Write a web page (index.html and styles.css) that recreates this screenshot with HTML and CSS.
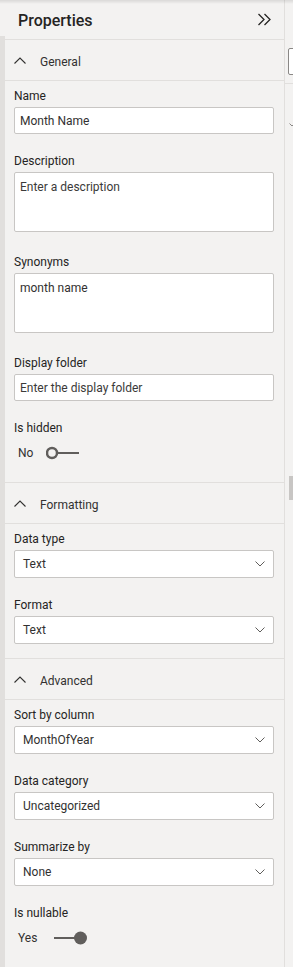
FILE: index.html
```html
<!DOCTYPE html>
<html lang="en">

<head>
    <meta charset="UTF-8">
    <meta name="viewport" content="width=device-width, initial-scale=1.0">
    <title>Properties</title>
    <link rel="stylesheet" href="styles.css">
</head>

<body>
    <div class="app">
        <div class="rail"></div>

        <aside class="panel">
            <header class="panel-head">
                <h1>Properties</h1>
                <svg class="collapse" width="14" height="13" viewBox="0 0 14 13">
                    <polyline points="1.5,1 7,6.5 1.5,12" />
                    <polyline points="7.5,1 13,6.5 7.5,12" />
                </svg>
            </header>

            <section class="group">
                <div class="group-head">
                    <svg class="chevron-up" width="12" height="7" viewBox="0 0 12 7"><polyline points="0.5,6.5 6,1 11.5,6.5" /></svg>
                    <span>General</span>
                </div>
                <div class="group-body">
                    <div class="field">
                        <label for="name">Name</label>
                        <input type="text" id="name" class="text-input" value="Month Name">
                    </div>
                    <div class="field field-tall">
                        <label for="description">Description</label>
                        <textarea id="description" placeholder="Enter a description"></textarea>
                    </div>
                    <div class="field field-tall">
                        <label for="synonyms">Synonyms</label>
                        <textarea id="synonyms">month name</textarea>
                    </div>
                    <div class="field">
                        <label for="folder">Display folder</label>
                        <input type="text" id="folder" class="text-input" placeholder="Enter the display folder">
                    </div>
                    <div class="field">
                        <label>Is hidden</label>
                        <div class="toggle">
                            <span>No</span>
                            <svg width="42" height="14" viewBox="0 0 42 14">
                                <circle cx="6" cy="7" r="5" class="knob-off" />
                                <line x1="11.5" y1="7" x2="33" y2="7" />
                            </svg>
                        </div>
                    </div>
                </div>
            </section>

            <section class="group">
                <div class="group-head">
                    <svg class="chevron-up" width="12" height="7" viewBox="0 0 12 7"><polyline points="0.5,6.5 6,1 11.5,6.5" /></svg>
                    <span>Formatting</span>
                </div>
                <div class="group-body">
                    <div class="field">
                        <label>Data type</label>
                        <div class="dropdown"><span>Text</span><svg width="10" height="6" viewBox="0 0 10 6"><polyline points="0.5,0.5 5,5 9.5,0.5" /></svg></div>
                    </div>
                    <div class="field">
                        <label>Format</label>
                        <div class="dropdown"><span>Text</span><svg width="10" height="6" viewBox="0 0 10 6"><polyline points="0.5,0.5 5,5 9.5,0.5" /></svg></div>
                    </div>
                </div>
            </section>

            <section class="group">
                <div class="group-head">
                    <svg class="chevron-up" width="12" height="7" viewBox="0 0 12 7"><polyline points="0.5,6.5 6,1 11.5,6.5" /></svg>
                    <span>Advanced</span>
                </div>
                <div class="group-body">
                    <div class="field">
                        <label>Sort by column</label>
                        <div class="dropdown"><span>MonthOfYear</span><svg width="10" height="6" viewBox="0 0 10 6"><polyline points="0.5,0.5 5,5 9.5,0.5" /></svg></div>
                    </div>
                    <div class="field">
                        <label>Data category</label>
                        <div class="dropdown"><span>Uncategorized</span><svg width="10" height="6" viewBox="0 0 10 6"><polyline points="0.5,0.5 5,5 9.5,0.5" /></svg></div>
                    </div>
                    <div class="field">
                        <label>Summarize by</label>
                        <div class="dropdown"><span>None</span><svg width="10" height="6" viewBox="0 0 10 6"><polyline points="0.5,0.5 5,5 9.5,0.5" /></svg></div>
                    </div>
                    <div class="field">
                        <label>Is nullable</label>
                        <div class="toggle">
                            <span>Yes</span>
                            <svg width="42" height="14" viewBox="0 0 42 14">
                                <line x1="8" y1="7" x2="30" y2="7" />
                                <circle cx="34.5" cy="7" r="6.5" class="knob-on" />
                            </svg>
                        </div>
                    </div>
                </div>
            </section>
        </aside>

        <div class="next-pane">
            <div class="peek-input"></div>
            <div class="peek-line"></div>
            <svg class="peek-caret" width="6" height="4" viewBox="0 0 6 4"><polyline points="0.5,0.5 3,3 5.5,0.5" /></svg>
            <div class="scroll-thumb"></div>
        </div>
    </div>
</body>

</html>
```

FILE: styles.css
```css
* {
    box-sizing: border-box;
}

body {
    margin: 0;
    font-family: Roboto, "Liberation Sans", sans-serif;
    font-size: 12px;
    color: #252423;
    background-color: #f3f2f1;
    overflow: hidden;
}

body::before {
    content: "";
    position: fixed;
    top: 0;
    left: 0;
    right: 0;
    height: 4px;
    background: linear-gradient(rgba(0, 0, 0, 0.1), rgba(0, 0, 0, 0));
}

.app {
    display: flex;
    height: 100vh;
}

.rail {
    width: 5px;
    background: linear-gradient(#f3f2f1 36px, #e1dfdd 36px);
}

.panel {
    width: 280px;
    border-right: 1px solid #e1dfdd;
    background-color: #f3f2f1;
}

.panel-head {
    height: 40px;
    border-bottom: 1px solid #e1dfdd;
    display: flex;
    align-items: center;
    justify-content: space-between;
    padding: 0 13px 0 13px;
}

.panel-head h1 {
    margin: 0;
    font-size: 16px;
    font-weight: 500;
    padding-top: 2px;
}

.collapse polyline {
    fill: none;
    stroke: #252423;
    stroke-width: 1.3;
}

.group + .group {
    border-top: 1px solid #e1dfdd;
}

.group-head {
    height: 41px;
    border-bottom: 1px solid #e1dfdd;
    display: flex;
    align-items: center;
    padding-left: 9px;
    color: #323130;
}

.group-head span {
    padding-top: 4px;
}

.chevron-up {
    margin-right: 14px;
}

.chevron-up polyline {
    fill: none;
    stroke: #323130;
    stroke-width: 1.1;
}

.group-body {
    padding: 7px 10px 14px 9px;
}

.field {
    margin-bottom: 19px;
}

.field-tall {
    margin-bottom: 22px;
}

.field:last-child {
    margin-bottom: 0;
}

.field label {
    display: block;
    line-height: 16px;
    margin-bottom: 3px;
}

.text-input,
textarea {
    display: block;
    width: 100%;
    border: 1px solid #c8c6c4;
    border-radius: 2px;
    background-color: white;
    font-family: inherit;
    font-size: 12px;
    color: #323130;
    outline: none;
}

.text-input {
    height: 27px;
    padding: 0 5px;
}

textarea {
    height: 60px;
    padding: 6px 5px;
    line-height: 16px;
    resize: none;
}

.text-input::placeholder,
textarea::placeholder {
    color: #3b3a39;
    opacity: 1;
}

.dropdown {
    height: 28px;
    border: 1px solid #c8c6c4;
    border-radius: 2px;
    background-color: white;
    display: flex;
    align-items: center;
    justify-content: space-between;
    padding: 0 8px 0 8px;
    color: #323130;
}

.dropdown polyline {
    fill: none;
    stroke: #605e5c;
    stroke-width: 1;
}

.toggle {
    display: flex;
    align-items: center;
    height: 20px;
    margin-top: 7px;
    margin-bottom: 5px;
    padding-left: 4px;
    color: #323130;
}

.toggle span {
    width: 28px;
}

.toggle line {
    stroke: #605e5c;
    stroke-width: 2;
}

.knob-off {
    fill: none;
    stroke: #605e5c;
    stroke-width: 2.5;
}

.knob-on {
    fill: #605e5c;
}

.next-pane {
    width: 8px;
    padding-top: 48px;
    overflow: hidden;
    background-color: #f3f2f1;
}

.peek-input {
    width: 12px;
    height: 27px;
    margin-left: 3px;
    border: 1px solid #8a8886;
    border-radius: 2px;
    background-color: white;
}

.peek-line {
    height: 1px;
    margin-top: 8px;
    background-color: #e1dfdd;
}

.peek-caret {
    display: block;
    margin: 39px 0 0 4px;
}

.peek-caret polyline {
    fill: none;
    stroke: #8a8886;
    stroke-width: 1;
}

.scroll-thumb {
    width: 4px;
    height: 24px;
    margin: 349px 0 0 4px;
    background-color: #c8c6c4;
}
```
